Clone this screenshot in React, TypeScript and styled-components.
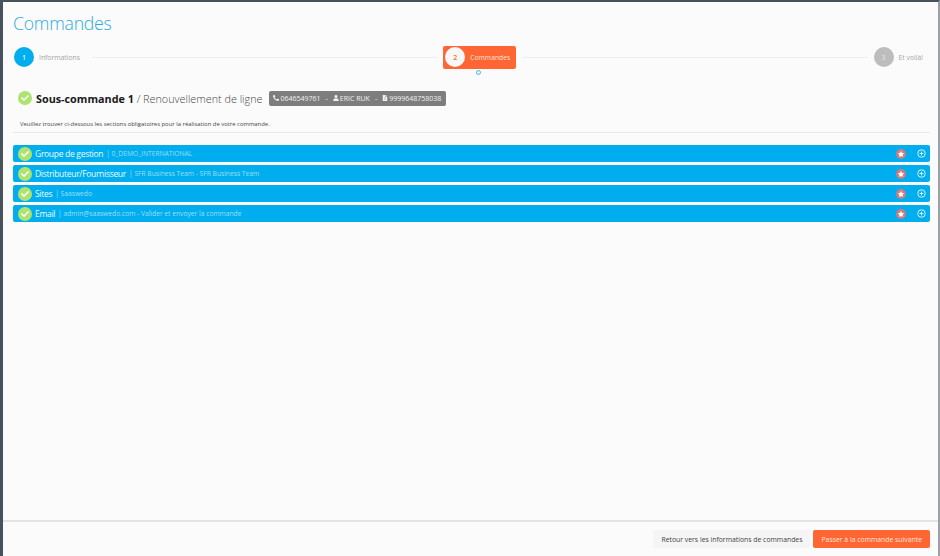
import React from "react";
import styled, { createGlobalStyle } from "styled-components";
import { FaPhoneAlt, FaUser, FaFileAlt, FaStar, FaCheck } from "react-icons/fa";

const GlobalStyle = createGlobalStyle`
  html, body {
    margin: 0;
    padding: 0;
    background: #fbfbfb;
  }
  * {
    box-sizing: border-box;
  }
`;

const Page = styled.div`
  position: relative;
  width: 940px;
  height: 556px;
  display: flex;
  flex-direction: column;
  overflow: hidden;
  background: #fbfbfb;
  border-top: 2px solid #47525c;
  border-left: 3px solid #47525c;
  border-right: 2px solid #9aa0a5;
  font-family: "Open Sans", "Liberation Sans", sans-serif;
`;

const SideTab = styled.div`
  position: absolute;
  left: -3px;
  top: 137px;
  width: 3px;
  height: 26px;
  background: #e0603a;
`;

const Main = styled.main`
  flex: 1;
  min-height: 0;
  padding: 10px 8px 0 10px;
`;

const Title = styled.h1`
  margin: 0;
  font-size: 17.6px;
  line-height: 22px;
  font-weight: 300;
  letter-spacing: -0.2px;
  color: #29abe2;
`;

const Stepper = styled.div`
  display: flex;
  align-items: center;
  height: 36px;
  margin-top: 5px;
  padding: 0 1px;
`;

const Step = styled.div<{ $active?: boolean }>`
  position: relative;
  display: flex;
  align-items: center;
  flex: none;
  gap: 5px;
  height: ${(p) => (p.$active ? "23px" : "auto")};
  padding: ${(p) => (p.$active ? "0 6px 0 2px" : "0")};
  border-radius: 2px;
  background: ${(p) => (p.$active ? "#ff6633" : "transparent")};
`;

const StepNumber = styled.span<{ $color: string; $text: string }>`
  display: flex;
  align-items: center;
  justify-content: center;
  width: 20px;
  height: 20px;
  border-radius: 50%;
  font-size: 7px;
  font-weight: 600;
  background: ${(p) => p.$color};
  color: ${(p) => p.$text};
`;

const StepLabel = styled.span<{ $active?: boolean }>`
  margin-right: ${(p) => (p.$active ? "0" : "6px")};
  font-size: 6.8px;
  font-weight: 400;
  color: ${(p) => (p.$active ? "#ffe3d8" : "#a5a5a5")};
`;

const StepLine = styled.div`
  flex: 1;
  height: 1px;
  margin: 0 6px;
  background: #eeeeee;
`;

const ActiveDot = styled.span`
  position: absolute;
  left: 33px;
  bottom: -6px;
  width: 5px;
  height: 5px;
  border: 1px solid #46b8ec;
  border-radius: 50%;
  background: #e8f6fc;
`;

const OrderHead = styled.div`
  display: flex;
  align-items: center;
  height: 16px;
  margin-top: 15px;
  padding-left: 5px;
`;

const CheckBadge = styled.span`
  display: flex;
  align-items: center;
  justify-content: center;
  flex: none;
  width: 14px;
  height: 14px;
  border-radius: 50%;
  background: #aee36f;
  color: #ffffff;
  font-size: 8px;
`;

const OrderTitle = styled.div`
  margin-left: 4px;
  font-size: 10.8px;
  font-weight: 300;
  color: #44484c;
  white-space: nowrap;

  strong {
    font-weight: 700;
    color: #1a1a1a;
  }
`;

const InfoTag = styled.div`
  display: flex;
  align-items: center;
  height: 15px;
  margin-left: 7px;
  padding: 0 5px 0 4px;
  border-radius: 2px;
  background: #7d7d7d;
  color: #f2f2f2;
  font-size: 7px;
  font-weight: 400;
  white-space: nowrap;
`;

const TagItem = styled.span`
  display: inline-flex;
  align-items: center;
  gap: 1px;
`;

const TagSep = styled.span`
  margin: 0 5px;
`;

const Intro = styled.p`
  margin: 14px 0 0;
  padding: 0 0 3px 7px;
  border-bottom: 1px solid #e8e8e8;
  font-size: 5.9px;
  line-height: 9px;
  color: #444444;
`;

const Sections = styled.div`
  display: flex;
  flex-direction: column;
  gap: 3px;
  margin-top: 12px;
`;

const Section = styled.div`
  display: flex;
  align-items: center;
  height: 17px;
  padding: 0 3px 0 5px;
  border-radius: 2px;
  background: #00aeef;
`;

const SectionName = styled.span`
  margin-left: 3px;
  font-size: 8.5px;
  font-weight: 400;
  letter-spacing: -0.3px;
  color: #eafaff;
  white-space: nowrap;
`;

const SectionDetail = styled.span`
  margin-left: 3px;
  flex: 1;
  font-size: 6.7px;
  color: #9fdff8;
  white-space: nowrap;
`;

const StarBadge = styled.span`
  display: flex;
  align-items: center;
  justify-content: center;
  width: 10px;
  height: 10px;
  border-radius: 50%;
  background: #cf7d7d;
  color: #ffffff;
  font-size: 6px;
`;

const PlusIcon = styled.svg`
  width: 9px;
  height: 9px;
  margin-left: 11px;
  margin-right: 1px;
`;

const Footer = styled.footer`
  display: flex;
  align-items: center;
  justify-content: flex-end;
  gap: 3px;
  height: 36px;
  padding: 0 8px 0 0;
  border-top: 2px solid #e3e3e3;
`;

const Button = styled.button<{ $primary?: boolean }>`
  height: 18px;
  padding: 0 8px;
  border: 0;
  border-radius: 2px;
  background: ${(p) => (p.$primary ? "#ff6633" : "#f5f5f5")};
  color: ${(p) => (p.$primary ? "#ffe8de" : "#444444")};
  font-family: inherit;
  font-size: 6.85px;
  font-weight: 400;
  white-space: nowrap;
`;

const sections = [
  { name: "Groupe de gestion", detail: "0_DEMO_INTERNATIONAL" },
  { name: "Distributeur/Fournisseur", detail: "SFR Business Team - SFR Business Team" },
  { name: "Sites", detail: "Saaswedo" },
  { name: "Email", detail: "admin@saaswedo.com - Valider et envoyer la commande" },
];

const App = () => {
  return (
    <>
      <GlobalStyle />
      <Page>
        <SideTab />
        <Main>
          <Title>Commandes</Title>
          <Stepper>
            <Step>
              <StepNumber $color="#00aeef" $text="#d6f3fd">1</StepNumber>
              <StepLabel>Informations</StepLabel>
            </Step>
            <StepLine />
            <Step $active>
              <StepNumber $color="#f7f7f7" $text="#ff6633">2</StepNumber>
              <StepLabel $active>Commandes</StepLabel>
              <ActiveDot />
            </Step>
            <StepLine />
            <Step>
              <StepNumber $color="#bdbdbd" $text="#dddddd">3</StepNumber>
              <StepLabel>Et voilà!</StepLabel>
            </Step>
          </Stepper>
          <OrderHead>
            <CheckBadge><FaCheck /></CheckBadge>
            <OrderTitle>
              <strong>Sous-commande 1</strong> / Renouvellement de ligne
            </OrderTitle>
            <InfoTag>
              <TagItem><FaPhoneAlt size={6} />0646549761</TagItem>
              <TagSep>-</TagSep>
              <TagItem><FaUser size={6} />ERIC RUK</TagItem>
              <TagSep>-</TagSep>
              <TagItem><FaFileAlt size={6} />9999648758038</TagItem>
            </InfoTag>
          </OrderHead>
          <Intro>Veuillez trouver ci-dessous les sections obligatoires pour la réalisation de votre commande.</Intro>
          <Sections>
            {sections.map((s) => (
              <Section key={s.name}>
                <CheckBadge><FaCheck /></CheckBadge>
                <SectionName>{s.name}</SectionName>
                <SectionDetail>| {s.detail}</SectionDetail>
                <StarBadge><FaStar /></StarBadge>
                <PlusIcon viewBox="0 0 12 12" fill="none" stroke="#eafaff">
                  <circle cx="6" cy="6" r="5" strokeWidth="1.2" />
                  <path d="M6 3.5v5M3.5 6h5" strokeWidth="1.2" />
                </PlusIcon>
              </Section>
            ))}
          </Sections>
        </Main>
        <Footer>
          <Button>Retour vers les informations de commandes</Button>
          <Button $primary>Passer à la commande suivante</Button>
        </Footer>
      </Page>
    </>
  );
};

export default App;
